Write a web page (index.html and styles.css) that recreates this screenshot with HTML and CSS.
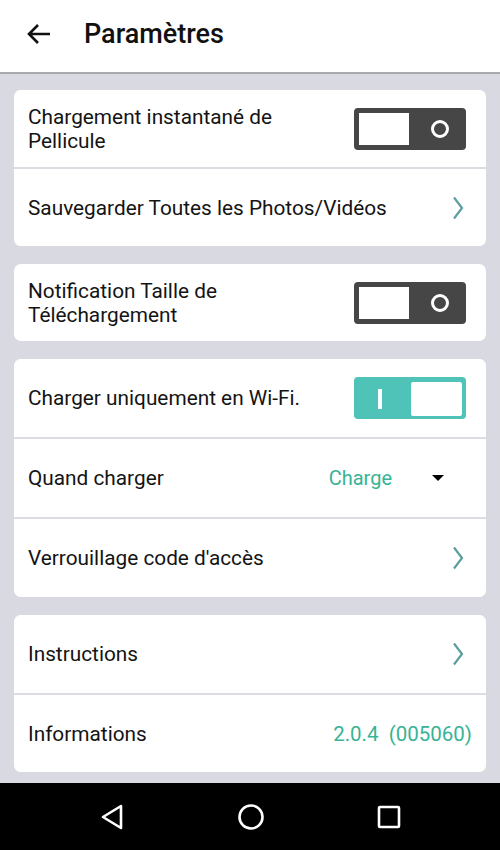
FILE: index.html
```html
<!DOCTYPE html>
<html lang="fr">
<head>
<meta charset="utf-8">
<title>Paramètres</title>
<link rel="stylesheet" href="styles.css">
</head>
<body>
<div class="screen">
  <header class="topbar">
    <svg class="back" width="26" height="24" viewBox="0 0 26 24"><path d="M24 12H3M12 3l-9 9 9 9" fill="none" stroke="#111" stroke-width="2.6"/></svg>
    <h1>Paramètres</h1>
  </header>

  <main class="content">
    <section class="card">
      <div class="row">
        <span class="label">Chargement instantané de<br>Pellicule</span>
        <span class="switch off"><span class="knob"></span><span class="mark-o"></span></span>
      </div>
      <div class="row">
        <span class="label">Sauvegarder Toutes les Photos/Vidéos</span>
        <svg class="chev" width="12" height="24" viewBox="0 0 12 24"><path d="M2 1.5l8 10.5-8 10.5" fill="none" stroke="#5b9ea0" stroke-width="2.2"/></svg>
      </div>
    </section>

    <section class="card">
      <div class="row">
        <span class="label">Notification Taille de<br>Téléchargement</span>
        <span class="switch off"><span class="knob"></span><span class="mark-o"></span></span>
      </div>
    </section>

    <section class="card">
      <div class="row tall">
        <span class="label">Charger uniquement en Wi-Fi.</span>
        <span class="switch on"><span class="mark-i"></span><span class="knob"></span></span>
      </div>
      <div class="row tall">
        <span class="label">Quand charger</span>
        <span class="select"><span class="value">Charge</span><span class="caret"></span></span>
      </div>
      <div class="row tall">
        <span class="label">Verrouillage code d'accès</span>
        <svg class="chev" width="12" height="24" viewBox="0 0 12 24"><path d="M2 1.5l8 10.5-8 10.5" fill="none" stroke="#5b9ea0" stroke-width="2.2"/></svg>
      </div>
    </section>

    <section class="card">
      <div class="row tall">
        <span class="label">Instructions</span>
        <svg class="chev" width="12" height="24" viewBox="0 0 12 24"><path d="M2 1.5l8 10.5-8 10.5" fill="none" stroke="#5b9ea0" stroke-width="2.2"/></svg>
      </div>
      <div class="row">
        <span class="label">Informations</span>
        <span class="version">2.0.4&nbsp; (005060)</span>
      </div>
    </section>
  </main>

  <nav class="navbar">
    <svg width="26" height="28" viewBox="0 0 26 28"><path d="M22 3L4 14l18 11z" fill="none" stroke="#fff" stroke-width="2.6" stroke-linejoin="round"/></svg>
    <svg width="28" height="28" viewBox="0 0 28 28"><circle cx="14" cy="14" r="11.5" fill="none" stroke="#fff" stroke-width="2.6"/></svg>
    <svg width="26" height="26" viewBox="0 0 26 26"><rect x="3" y="3" width="20" height="20" rx="1" fill="none" stroke="#fff" stroke-width="2.6"/></svg>
  </nav>
</div>
</body>
</html>
```

FILE: styles.css
```css
html, body {
  margin: 0;
  padding: 0;
}

body {
  font-family: Roboto, "Noto Sans", sans-serif;
  background: #d9d9e1;
  color: #111;
}

.screen {
  width: 500px;
  height: 850px;
  display: flex;
  flex-direction: column;
  overflow: hidden;
}

.topbar {
  flex: none;
  height: 74px;
  box-sizing: border-box;
  background: #fff;
  border-bottom: 2px solid #a9a9ae;
  display: flex;
  align-items: center;
}

.back {
  margin-left: 26px;
  margin-right: 32px;
  margin-top: -4px;
}

.topbar h1 {
  margin: 0;
  margin-top: -4px;
  font-size: 27px;
  font-weight: 500;
}

.content {
  flex: 1;
  padding: 16px 14px 0;
  display: flex;
  flex-direction: column;
  gap: 18px;
}

.card {
  background: #fff;
  border-radius: 7px;
  display: flex;
  flex-direction: column;
  gap: 2px;
  overflow: hidden;
}

.card .row + .row {
  box-shadow: 0 -2px 0 #dcdce3;
}

.row {
  height: 77px;
  background: #fff;
  display: flex;
  align-items: center;
  justify-content: space-between;
  padding: 0 14px;
  box-sizing: border-box;
}

.row.tall {
  height: 78px;
}

.label {
  font-size: 20.8px;
  line-height: 24px;
  color: #141414;
}

.switch {
  width: 112px;
  height: 42px;
  border-radius: 4px;
  box-sizing: border-box;
  padding: 5px;
  display: flex;
  align-items: center;
  margin-right: 6px;
}

.switch.off {
  background: #464646;
}

.switch.on {
  background: #50c3b8;
  padding: 4px 3px 3px 5px;
}

.knob {
  width: 50px;
  height: 32px;
  background: #fff;
  display: block;
}

.switch.on .knob {
  width: 51px;
  height: 34px;
  border-radius: 2px;
}

.mark-o {
  width: 12px;
  height: 12px;
  border: 3.5px solid #fff;
  border-radius: 50%;
  margin-left: 22px;
}

.mark-i {
  width: 4px;
  height: 20px;
  background: #fff;
  margin-left: 19px;
  margin-right: 29px;
}

.chev {
  margin-right: 8px;
}

.select {
  display: flex;
  align-items: center;
  margin-right: 28px;
}

.select .value {
  font-size: 20px;
  color: #37b395;
}

.caret {
  width: 0;
  height: 0;
  border-left: 6px solid transparent;
  border-right: 6px solid transparent;
  border-top: 6px solid #000;
  margin-left: 40px;
}

.version {
  font-size: 20.5px;
  color: #37b395;
}

.navbar {
  height: 67px;
  flex: none;
  background: #000;
  display: flex;
  align-items: center;
  justify-content: space-between;
  padding: 0 98px 0 99px;
}
```
